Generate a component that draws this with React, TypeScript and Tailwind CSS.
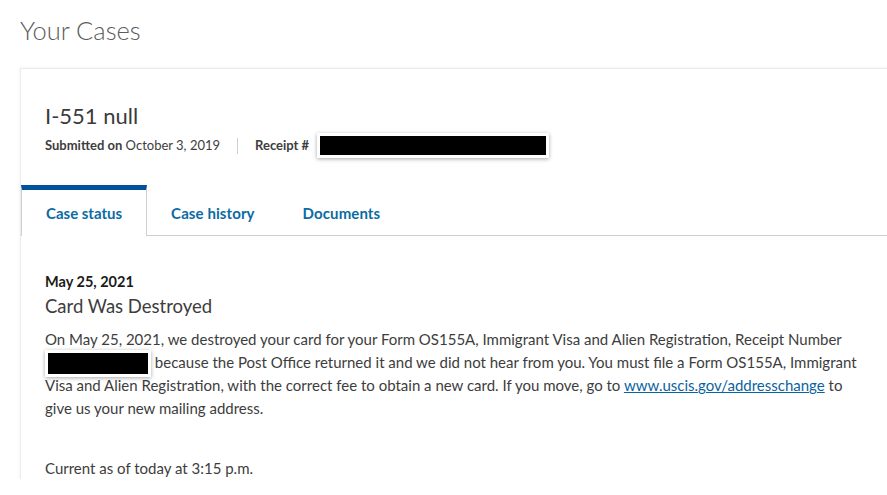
const tabs = ["Case status", "Case history", "Documents"];

function Redacted({ w, h, className = "" }: { w: number; h: number; className?: string }) {
  return (
    <span
      className={`inline-block border-[3px] border-white align-middle shadow-[0_1px_4px_rgba(0,0,0,0.35)] ${className}`}
    >
      <span className="block bg-black" style={{ width: w, height: h }} />
    </span>
  );
}

export default function App() {
  return (
    <div className="min-h-screen overflow-hidden bg-white pl-5 pt-[12px] font-['Lato','Noto_Sans',sans-serif] text-[#3d3d3d]">
      {/* Page title */}
      <h1 className="text-[25.5px] font-light leading-9 text-[#5c5c5c]">Your Cases</h1>

      {/* Case card */}
      <div className="mt-[20px] w-[900px] border-l border-t border-[#ececec] shadow-[-1px_-1px_3px_rgba(0,0,0,0.04)]">
        <div className="px-6 pt-[31px]">
          <h2 className="text-[22px] leading-8 text-[#3b3b3b]">I-551 null</h2>
          <div className="mt-[1px] flex items-center text-[13px]">
            <span>
              <span className="font-bold">Submitted on</span> October 3, 2019
            </span>
            <span className="mx-[17px] h-4 w-px bg-[#d0d0d0]" />
            <span className="font-bold">Receipt #</span>
            <span className="ml-[8px]">
              <Redacted w={226} h={19} />
            </span>
          </div>
        </div>

        {/* Tabs */}
        <div className="mt-[27px] flex border-b border-[#cfcfcf]">
          {tabs.map((t, i) =>
            i === 0 ? (
              <div
                key={t}
                className="-mb-px h-[51px] border-x border-[#cfcfcf] border-t-[5px] border-t-[#00529b] bg-white px-6 pt-[12px] text-[15px] font-bold text-[#0b6ba3]"
              >
                {t}
              </div>
            ) : (
              <div key={t} className="h-[50px] px-6 pt-[17px] text-[15px] font-bold tracking-[0.1px] text-[#0b6ba3]">
                {t}
              </div>
            )
          )}
        </div>

        {/* Status content */}
        <div className="w-[860px] px-6 pt-[36px]">
          <div className="text-[14.5px] font-bold leading-5 text-[#1b1b1b]">May 25, 2021</div>
          <div className="mt-[0px] text-[18.5px] leading-7">Card Was Destroyed</div>
          <p className="mt-[8px] whitespace-nowrap text-[15px] leading-[22.7px]">
            On May 25, 2021, we destroyed your card for your Form OS155A, Immigrant Visa and Alien
            Registration, Receipt Number
            <br />
            <Redacted w={100} h={21} className="-my-[3px]" /> because the Post Office returned it and
            we did not hear from you. You must file a Form OS155A, Immigrant
            <br />
            Visa and Alien Registration, with the correct fee to obtain a new card. If you move, go to{" "}
            <a href="#" className="text-[#0a64a0] underline">
              www.uscis.gov/addresschange
            </a>{" "}
            to
            <br />
            give us your new mailing address.
          </p>
          <p className="mt-[37px] text-[15px]">Current as of today at 3:15 p.m.</p>
        </div>
      </div>
    </div>
  );
}
